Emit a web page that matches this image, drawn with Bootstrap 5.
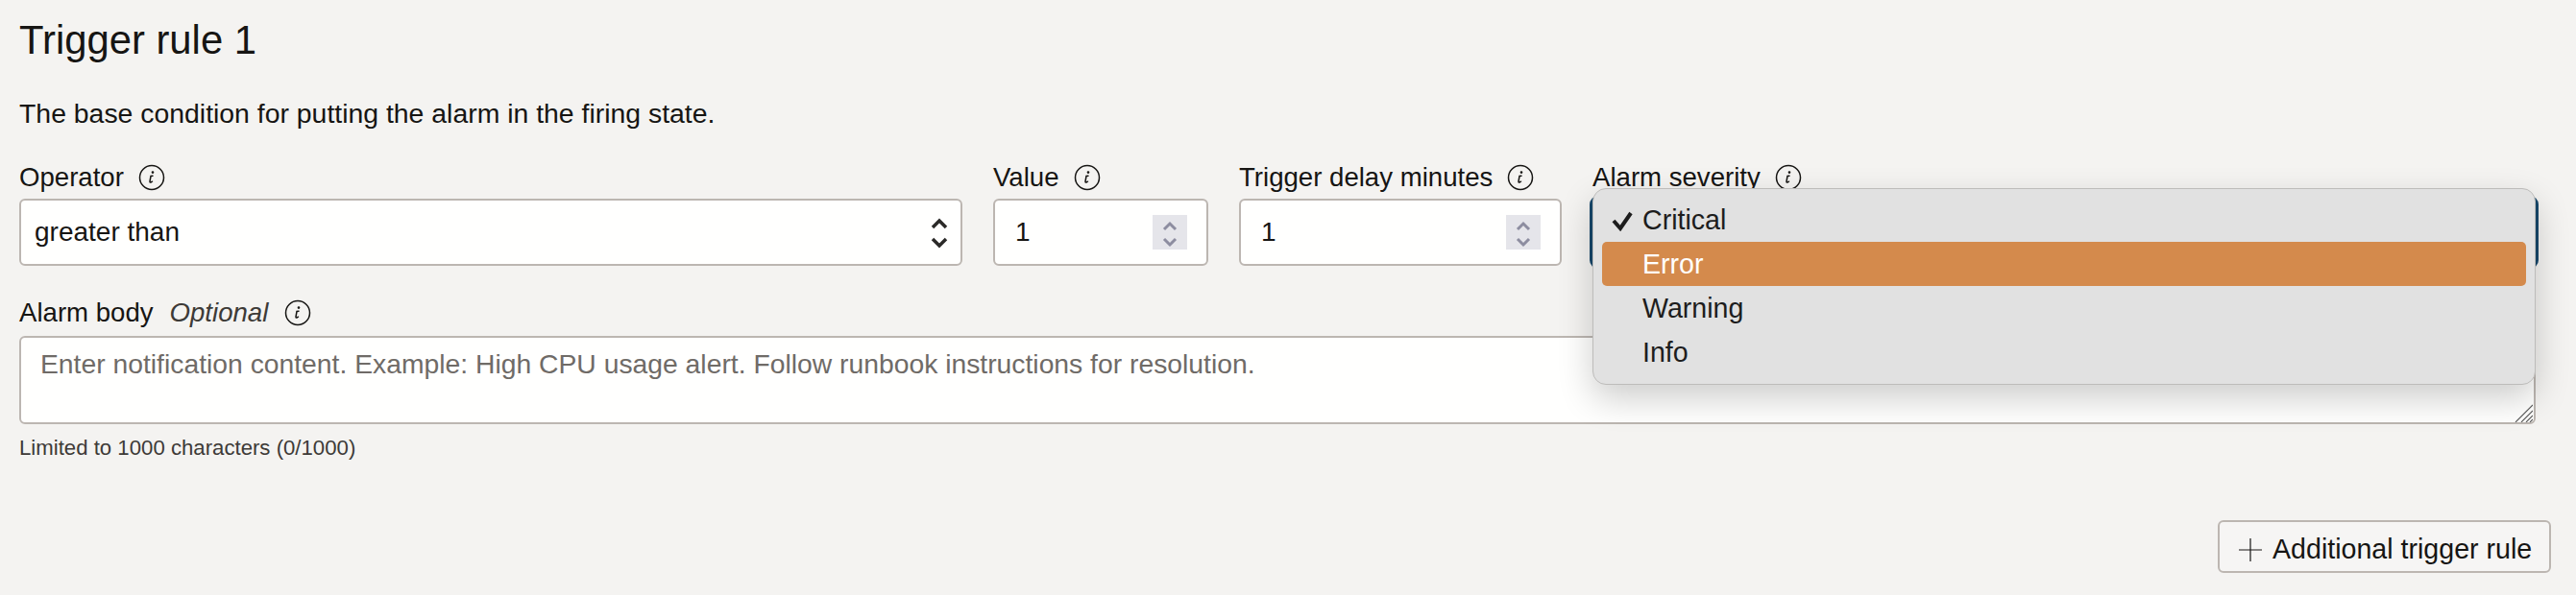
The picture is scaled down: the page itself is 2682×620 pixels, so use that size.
<!DOCTYPE html>
<html lang="en">
<head>
<meta charset="utf-8">
<title>Trigger rule</title>
<link href="https://cdn.jsdelivr.net/npm/bootstrap@5.3.0/dist/css/bootstrap.min.css" rel="stylesheet">
<script src="https://cdn.jsdelivr.net/npm/bootstrap@5.3.0/dist/js/bootstrap.bundle.min.js"></script>
<style>
html,body{height:620px;overflow:hidden}
body{background:#f4f3f1;color:#161513;font-family:"Liberation Sans",Arial,sans-serif;font-size:28px;line-height:36px}
.rule-page{padding:18px 42px 0 20px;height:620px}
.rule-title{font-size:41.8px;line-height:48px;font-weight:400;margin:0;color:#161513}
.rule-desc{margin:34px 0 0;font-size:28.4px;line-height:36px}
.rule-grid{display:grid;grid-template-columns:982px 224px 336px 982px;column-gap:32px;margin-top:31px}
.rule-label{display:flex;align-items:center;height:36px;margin:0 0 4px;font-size:27.6px;color:#161513}
.rule-label em{margin-left:17px;color:#3d3a37}
.info-ico{width:28px;height:28px;margin-left:15px;flex:none}
.rule-label em + .info-ico{margin-left:17px}
.rule-input.form-control,.rule-input.form-select{height:70px;border:2px solid #bcb6b1;border-radius:6px;background-color:#fffffe;color:#161513;font-size:28px;padding:0 14px;box-shadow:none}
.rule-input.form-select{background-image:none}
.rule-num.form-control{padding-left:21px}
.rule-field{position:relative}
.chev-sel{position:absolute;right:12px;top:59px;width:24px;height:34px;pointer-events:none}
.spin-box{position:absolute;right:22px;top:57px;width:36px;height:36px;background:#e5e5ea;pointer-events:none}
.rule-focus.form-select{border-color:#17486b;box-shadow:0 0 0 3px #17486b}
.sev-pop{position:absolute;left:0;right:0;top:29px;z-index:5;padding:9px;height:205px;background:#e1e1e1;border:1px solid #bdbcba;border-radius:14px;box-shadow:0 14px 36px rgba(0,0,0,.2)}
.sev-item{display:flex;align-items:center;height:46px;padding-left:42px;border-radius:5px;font-size:28.6px;color:#1d1d1d;position:relative}
.sev-item.is-on{background:#d48a4c;color:#fff}
.sev-check{position:absolute;left:10px;top:13px;width:22px;height:22px}
.rule-body{margin-top:31px}
.rule-body .rule-label{margin-bottom:6px}
.rule-area-wrap{position:relative;height:92px}
.rule-area.form-control{height:92px;width:100%;border:2px solid #bcb6b1;border-radius:6px;background:#fffffe;font-size:28.3px;padding:9px 20px;line-height:36px;color:#161513;box-shadow:none;resize:none}
.rule-area.form-control::placeholder{color:#6f6b67;opacity:1}
.area-grip{position:absolute;right:3px;bottom:2px;width:19px;height:19px;pointer-events:none}
.rule-hint{margin:11px 0 0;font-size:22.2px;line-height:28px;color:#3d3a37}
.rule-add-row{margin-top:61px;margin-right:-16px}
.rule-add.btn{display:flex;align-items:center;height:55px;width:347px;padding:6px 0 0 20px;border:2px solid #bcb6b1;border-radius:6px;background:#f6f5f4;color:#161513;font-size:28.6px}
.plus-ico{width:24px;height:24px;margin-right:11px;flex:none}
</style>
</head>
<body>
<main class="rule-page">
  <h2 class="rule-title">Trigger rule 1</h2>
  <p class="rule-desc">The base condition for putting the alarm in the firing state.</p>
  <div class="rule-grid">
    <div class="rule-field">
      <label class="rule-label">Operator
        <svg class="info-ico" viewBox="0 0 28 28" fill="none" stroke="#161513" stroke-width="1.5"><circle cx="14" cy="14" r="12.5"/><path d="M15 12.2l-2 .3-1 5.5q-.1 1.2 1 1l1.5-.8" stroke-linecap="round"/><circle cx="15" cy="8.6" r=".6"/></svg>
      </label>
      <select class="form-select rule-input"><option>greater than</option></select>
      <svg class="chev-sel" viewBox="0 0 24 34" fill="none" stroke="#2b2a28" stroke-width="3.5"><path d="M5 11l7-7 7 7M5 23l7 7 7-7"/></svg>
    </div>
    <div class="rule-field">
      <label class="rule-label">Value
        <svg class="info-ico" viewBox="0 0 28 28" fill="none" stroke="#161513" stroke-width="1.5"><circle cx="14" cy="14" r="12.5"/><path d="M15 12.2l-2 .3-1 5.5q-.1 1.2 1 1l1.5-.8" stroke-linecap="round"/><circle cx="15" cy="8.6" r=".6"/></svg>
      </label>
      <input class="form-control rule-input rule-num" value="1">
      <span class="spin-box"><svg viewBox="0 0 36 36" fill="none" stroke="#8d8da0" stroke-width="3"><path d="M12 13l6-6 6 6M12 23l6 6 6-6"/></svg></span>
    </div>
    <div class="rule-field">
      <label class="rule-label">Trigger delay minutes
        <svg class="info-ico" viewBox="0 0 28 28" fill="none" stroke="#161513" stroke-width="1.5"><circle cx="14" cy="14" r="12.5"/><path d="M15 12.2l-2 .3-1 5.5q-.1 1.2 1 1l1.5-.8" stroke-linecap="round"/><circle cx="15" cy="8.6" r=".6"/></svg>
      </label>
      <input class="form-control rule-input rule-num" value="1">
      <span class="spin-box"><svg viewBox="0 0 36 36" fill="none" stroke="#8d8da0" stroke-width="3"><path d="M12 13l6-6 6 6M12 23l6 6 6-6"/></svg></span>
    </div>
    <div class="rule-field">
      <label class="rule-label">Alarm severity
        <svg class="info-ico" viewBox="0 0 28 28" fill="none" stroke="#161513" stroke-width="1.5"><circle cx="14" cy="14" r="12.5"/><path d="M15 12.2l-2 .3-1 5.5q-.1 1.2 1 1l1.5-.8" stroke-linecap="round"/><circle cx="15" cy="8.6" r=".6"/></svg>
      </label>
      <select class="form-select rule-input rule-focus"><option>Critical</option></select>
      <div class="sev-pop">
        <div class="sev-item"><svg class="sev-check" viewBox="0 0 22 22" fill="none" stroke="#1d1d1d" stroke-width="4"><path d="M2 11l7 8L20 3"/></svg>Critical</div>
        <div class="sev-item is-on">Error</div>
        <div class="sev-item">Warning</div>
        <div class="sev-item">Info</div>
      </div>
    </div>
  </div>
  <div class="rule-body">
    <label class="rule-label">Alarm body <em>Optional</em>
      <svg class="info-ico" viewBox="0 0 28 28" fill="none" stroke="#161513" stroke-width="1.5"><circle cx="14" cy="14" r="12.5"/><path d="M15 12.2l-2 .3-1 5.5q-.1 1.2 1 1l1.5-.8" stroke-linecap="round"/><circle cx="15" cy="8.6" r=".6"/></svg>
    </label>
    <div class="rule-area-wrap">
      <textarea class="form-control rule-area" placeholder="Enter notification content. Example: High CPU usage alert. Follow runbook instructions for resolution."></textarea>
      <svg class="area-grip" viewBox="0 0 19 19" stroke="#5a5a5a" stroke-width="1.1"><path d="M1 19L19 1M7 19L19 7M12 19l7-7M16 19l3-3"/></svg>
    </div>
    <p class="rule-hint">Limited to 1000 characters (0/1000)</p>
  </div>
  <div class="d-flex justify-content-end rule-add-row">
    <button type="button" class="btn rule-add">
      <svg class="plus-ico" viewBox="0 0 24 24" stroke="#161513" stroke-width="1.2"><path d="M12 0v24M0 12h24"/></svg>Additional trigger rule
    </button>
  </div>
</main>
</body>
</html>
